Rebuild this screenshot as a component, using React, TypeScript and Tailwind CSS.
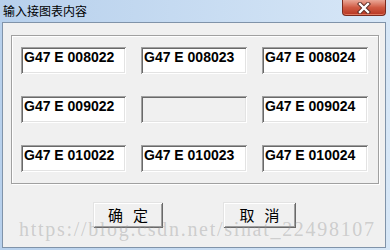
import React from "react";

const sunken =
  "shadow-[inset_1px_1px_0_#a0a0a0,inset_-1px_-1px_0_#ffffff,inset_2px_2px_0_#696969,inset_-2px_-2px_0_#e3e3e3]";
const raised =
  "shadow-[inset_1px_1px_0_#e3e3e3,inset_-1px_-1px_0_#696969,inset_2px_2px_0_#ffffff,inset_-2px_-2px_0_#a0a0a0]";

function Edit({ text }: { text?: string }) {
  return (
    <div
      className={`h-[27px] pl-[3px] pt-[2px] ${sunken} ${
        text ? "bg-white" : "bg-[#f0f0f0]"
      } text-[14px] leading-[16px] font-bold text-black whitespace-nowrap`}
      style={{ fontFamily: '"Liberation Sans", Arial, sans-serif' }}
    >
      {text}
    </div>
  );
}

function Btn({ a, b, w }: { a: string; b: string; w: string }) {
  return (
    <div
      className={`${w} h-[26px] bg-[#f0f0f0] ${raised} flex items-center justify-center gap-[10px] text-[15px] leading-[16px] text-black`}
      style={{ fontFamily: '"Noto Sans CJK SC", sans-serif' }}
    >
      <span>{a}</span>
      <span>{b}</span>
    </div>
  );
}

function CloseBtn() {
  return (
    <div className="w-[44px] h-[16px] rounded-b-[4px] border border-t-0 border-[#7a2b1e] bg-gradient-to-b from-[#e9a797] via-[#cf5a43] to-[#b73520] shadow-[inset_0_-1px_0_#e07a62] flex items-center justify-center">
      <svg width="16" height="12" viewBox="0 0 16 12">
        <path d="M4 2 L12 10 M12 2 L4 10" stroke="#5a2a22" strokeWidth="4.2" strokeLinecap="square" />
        <path d="M4 2 L12 10 M12 2 L4 10" stroke="#ffffff" strokeWidth="2.4" strokeLinecap="square" />
      </svg>
    </div>
  );
}

export default function App() {
  const rows: (string | undefined)[][] = [
    ["G47 E 008022", "G47 E 008023", "G47 E 008024"],
    ["G47 E 009022", undefined, "G47 E 009024"],
    ["G47 E 010022", "G47 E 010023", "G47 E 010024"],
  ];
  return (
    <div className="relative w-[390px] h-[250px] overflow-hidden flex flex-col bg-gradient-to-r from-[#b7d0ec] to-[#d7e7f7]">
      <div className="h-[22px] flex items-start justify-between pl-[3px] pr-[4px]">
        <span
          className="mt-[4px] text-[12px] leading-[14px] text-black"
          style={{ fontFamily: '"Noto Sans CJK SC", sans-serif' }}
        >
          输入接图表内容
        </span>
        <CloseBtn />
      </div>
      <div className="ml-[2px] mr-[4px] mb-[2px] flex-1 border border-[#8093a9] bg-[#f0f0f0] pt-[12px] pl-[8px] flex flex-col">
        <div className="w-[368px] h-[149px] border border-[#a0a0a0] shadow-[inset_1px_1px_0_#ffffff,1px_1px_0_#ffffff] pl-[9px] pt-[11px]">
          <div className="grid grid-cols-[105px_106px_106px] gap-x-[15px] gap-y-[22px]">
            {rows.flat().map((t, i) => (
              <Edit key={i} text={t} />
            ))}
          </div>
        </div>
        <div className="flex mt-[18px] ml-[82px] gap-[60px]">
          <Btn a="确" b="定" w="w-[70px]" />
          <Btn a="取" b="消" w="w-[73px]" />
        </div>
      </div>
      <div
        className="absolute left-[19px] top-[219px] text-[20px] leading-[20px] tracking-[1.7px] text-[rgba(150,150,150,0.4)] whitespace-nowrap pointer-events-none"
        style={{ fontFamily: '"Liberation Serif", "Times New Roman", serif' }}
      >
        https://blog.csdn.net/sinat_22498107
      </div>
    </div>
  );
}
